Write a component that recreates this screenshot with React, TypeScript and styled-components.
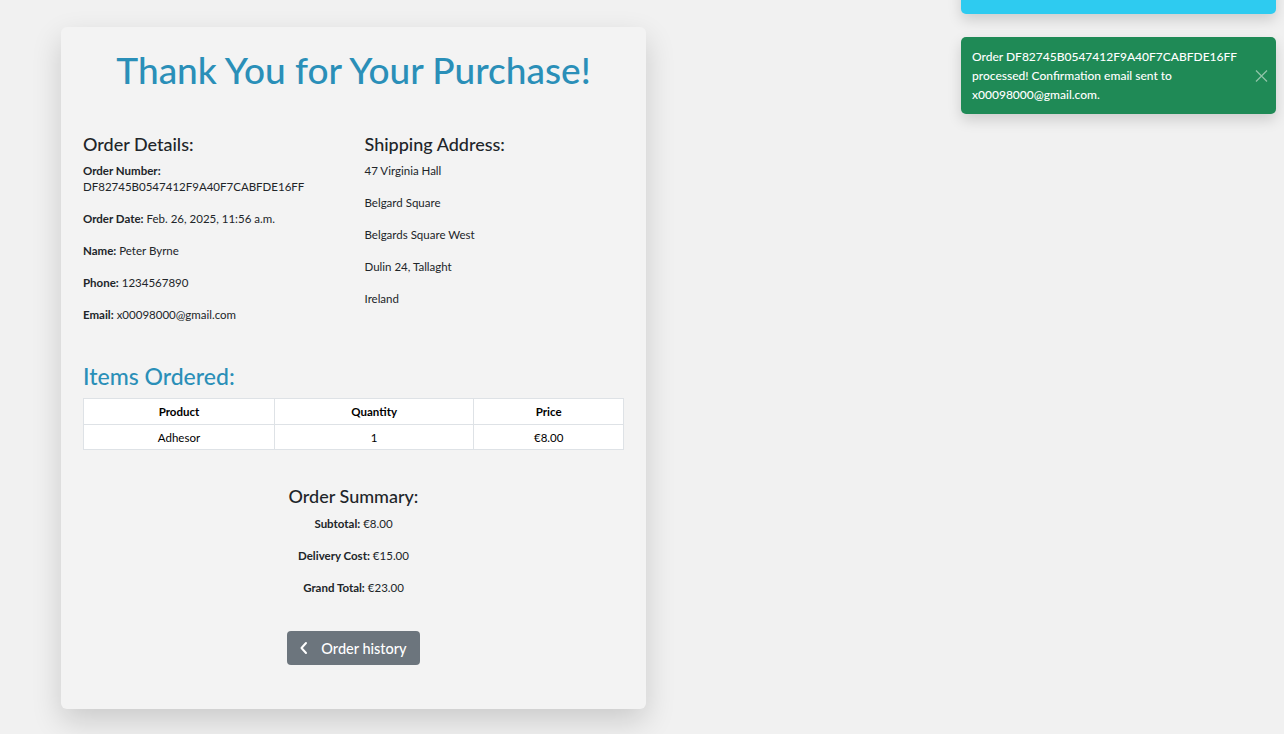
import React from "react";
import styled, { createGlobalStyle } from "styled-components";

const Global = createGlobalStyle`
  html, body { margin: 0; padding: 0; }
  body {
    background: #f1f1f1;
    font-family: Lato, "Noto Sans", sans-serif;
    color: #212529;
    width: 1284px;
    height: 734px;
    overflow: hidden;
    position: relative;
  }
`;

const Page = styled.div`
  padding: 27px 0 0 61px;
`;

const Card = styled.div`
  width: 585px;
  height: 682px;
  box-sizing: border-box;
  background: #f3f3f3;
  border-radius: 6px;
  box-shadow: 0 12px 30px rgba(0, 0, 0, 0.16);
  padding: 22px 22px;
  display: flex;
  flex-direction: column;
`;

const Title = styled.h1`
  margin: 0;
  text-align: center;
  color: #2a8fb8;
  font-size: 37px;
  font-weight: 500;
  line-height: 42px;
`;

const Columns = styled.div`
  display: grid;
  grid-template-columns: 1fr 1fr;
  column-gap: 22px;
  margin-top: 42px;
`;

const SectionHeading = styled.h3<{ $center?: boolean }>`
  margin: 0 0 ${(p) => (p.$center ? "9px" : "8px")};
  font-size: 18px;
  font-weight: 500;
  line-height: 22px;
  color: #212529;
  text-align: ${(p) => (p.$center ? "center" : "left")};
`;

const Line = styled.p<{ $center?: boolean }>`
  margin: 0 0 16px;
  font-size: 11.5px;
  line-height: 16px;
  text-align: ${(p) => (p.$center ? "center" : "left")};
`;

const BlueHeading = styled.h2`
  margin: 23px 0 8px;
  color: #2a8fb8;
  font-size: 23px;
  font-weight: 500;
  line-height: 28px;
`;

const Table = styled.table`
  width: 100%;
  border-collapse: collapse;
  background: #fff;
  font-size: 11.5px;
  color: #000;
  table-layout: fixed;
`;

const Th = styled.th<{ $w: string }>`
  width: ${(p) => p.$w};
  border: 1px solid #dee2e6;
  height: 25px;
  padding: 0 6px;
  font-weight: 700;
  text-align: center;
`;

const Td = styled.td`
  border: 1px solid #dee2e6;
  height: 24px;
  padding: 0 6px;
  text-align: center;
`;

const Summary = styled.div`
  margin-top: 35px;
  display: flex;
  flex-direction: column;
  align-items: center;
`;

const BackButton = styled.button`
  align-self: center;
  margin-top: 19px;
  display: inline-flex;
  align-items: center;
  gap: 12px;
  height: 34px;
  padding: 0 13px 0 12px;
  border: none;
  border-radius: 4px;
  background: #6c757d;
  color: #fff;
  font-family: inherit;
  font-size: 14.5px;
  font-weight: 500;
`;

const ToastStack = styled.div`
  position: absolute;
  top: -44px;
  left: 961px;
  width: 315px;
  display: flex;
  flex-direction: column;
  gap: 23px;
`;

const Toast = styled.div<{ $bg: string }>`
  background: ${(p) => p.$bg};
  color: #fff;
  border-radius: 5px;
  box-shadow: 0 6px 14px rgba(0, 0, 0, 0.15);
  padding: 10px 32px 10px 11px;
  font-size: 12px;
  line-height: 19px;
  font-weight: 500;
  position: relative;
  min-height: 39px;
`;

const Close = styled.span<{ $color: string }>`
  position: absolute;
  right: 8px;
  top: 50%;
  transform: translateY(-50%);
  display: flex;
  color: ${(p) => p.$color};
`;

const X = () => (
  <svg width="13" height="13" viewBox="0 0 13 13" fill="none" stroke="currentColor" strokeWidth="1.3">
    <path d="M1 1 L12 12 M12 1 L1 12" />
  </svg>
);

const Chevron = () => (
  <svg width="10" height="14" viewBox="0 0 10 14" fill="none" stroke="#fff" strokeWidth="2" strokeLinecap="round" strokeLinejoin="round">
    <path d="M7 2 L2.5 7 L7 12" />
  </svg>
);

export default function App() {
  return (
    <>
      <Global />
      <Page>
        <Card>
          <Title>Thank You for Your Purchase!</Title>
          <Columns>
            <div>
              <SectionHeading>Order Details:</SectionHeading>
              <Line>
                <b>Order Number:</b>
                <br />
                DF82745B0547412F9A40F7CABFDE16FF
              </Line>
              <Line><b>Order Date:</b> Feb. 26, 2025, 11:56 a.m.</Line>
              <Line><b>Name:</b> Peter Byrne</Line>
              <Line><b>Phone:</b> 1234567890</Line>
              <Line><b>Email:</b> x00098000@gmail.com</Line>
            </div>
            <div>
              <SectionHeading>Shipping Address:</SectionHeading>
              <Line>47 Virginia Hall</Line>
              <Line>Belgard Square</Line>
              <Line>Belgards Square West</Line>
              <Line>Dulin 24, Tallaght</Line>
              <Line>Ireland</Line>
            </div>
          </Columns>
          <BlueHeading>Items Ordered:</BlueHeading>
          <Table>
            <thead>
              <tr>
                <Th $w="35.5%">Product</Th>
                <Th $w="37.2%">Quantity</Th>
                <Th $w="27.3%">Price</Th>
              </tr>
            </thead>
            <tbody>
              <tr>
                <Td>Adhesor</Td>
                <Td>1</Td>
                <Td>€8.00</Td>
              </tr>
            </tbody>
          </Table>
          <Summary>
            <SectionHeading $center>Order Summary:</SectionHeading>
            <Line $center><b>Subtotal:</b> €8.00</Line>
            <Line $center><b>Delivery Cost:</b> €15.00</Line>
            <Line $center><b>Grand Total:</b> €23.00</Line>
          </Summary>
          <BackButton>
            <Chevron />
            Order history
          </BackButton>
        </Card>
      </Page>
      <ToastStack>
        <Toast $bg="#2ecbf0" style={{ height: 58, boxSizing: "border-box" }}>
          <Close $color="#1a6f85"><X /></Close>
        </Toast>
        <Toast $bg="#1f8a56">
          Order DF82745B0547412F9A40F7CABFDE16FF processed! Confirmation email sent to x00098000@gmail.com.
          <Close $color="#8fc4a8"><X /></Close>
        </Toast>
      </ToastStack>
    </>
  );
}
